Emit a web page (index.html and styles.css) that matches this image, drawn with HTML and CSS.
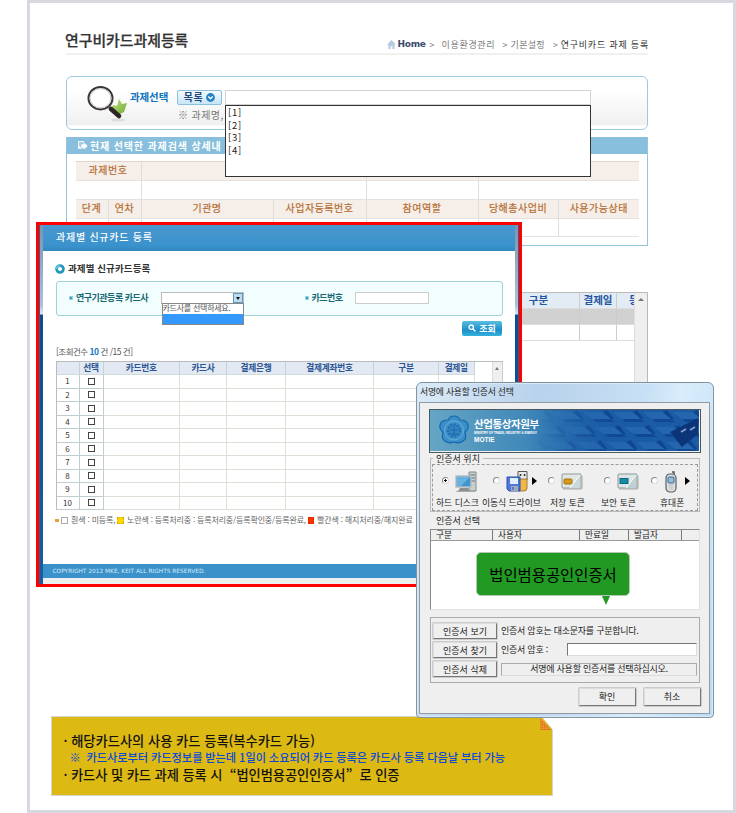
FILE: index.html
```html
<!DOCTYPE html>
<html lang="ko">
<head>
<meta charset="utf-8">
<title>연구비카드과제등록</title>
<link rel="stylesheet" href="styles.css">
</head>
<body>
<main class="page">
  <header class="page-head">
    <h1>연구비카드과제등록</h1>
    <nav class="crumbs">
      <svg width="9" height="9" viewBox="0 0 9 9"><path d="M4.5 0 0 4.4h1.4V9h2.2V6h1.8v3h2.2V4.4H9z" fill="#b5cbe2"/></svg>
      <b>Home</b><span class="c1">&gt;&nbsp; 이용환경관리</span><span class="c2">&gt; 기본설정</span><span class="c3">&gt; <em>연구비카드 과제 등록</em></span>
    </nav>
  </header>

  <section class="search">
    <svg class="lens" width="42" height="38" viewBox="0 0 42 38">
      <defs><linearGradient id="leaf" x2="1" y2="1"><stop stop-color="#c3df7e"/><stop offset="1" stop-color="#6faa35"/></linearGradient></defs>
      <ellipse cx="31" cy="34" rx="7" ry="1.6" fill="#ddd"/>
      <path d="m23 24 3-5 4 1 2-7 3 5 5-1-3 9-8 4z" fill="url(#leaf)"/>
      <ellipse cx="13.5" cy="12.2" rx="12" ry="11.2" fill="#fff" stroke="#3b3535" stroke-width="2"/>
      <ellipse cx="13.5" cy="12.2" rx="10.4" ry="9.6" fill="none" stroke="#bbb" stroke-width=".8"/>
      <path d="m22 21 3 3" stroke="#777" stroke-width="3"/><path d="m24 23 8 7" stroke="#2d2626" stroke-width="4.6" stroke-linecap="round"/>
    </svg>
    <div class="search-form">
      <div class="search-row">
        <strong>과제선택</strong>
        <button class="list-btn"><span>목록</span><svg width="9" height="9" viewBox="0 0 9 9"><circle cx="4.5" cy="4.5" r="4.4" fill="#2380c6"/><path d="m2.3 3.5 2.2 2.3 2.2-2.3" fill="none" stroke="#fff" stroke-width="1.4"/></svg></button>
        <div class="field"></div>
      </div>
      <p>※ 과제명,</p>
    </div>
    <ul class="suggest"><li>[1]</li><li>[2]</li><li>[3]</li><li>[4]</li></ul>
  </section>

  <section class="panel">
    <h2><svg width="11" height="11" viewBox="0 0 11 11"><path d="M1 1h6v8H1z" fill="#e8f4fa"/><path d="M2 3h4M2 5h4" stroke="#75adca"/><path d="M4 4h3V2l4 4-4 4V8H4z" fill="#fff" stroke="#78b4d2" stroke-width=".5"/></svg>현재 선택한 과제검색 상세내</h2>
    <div class="info">
      <div class="r top hd"><span>과제번호</span><span></span><span></span><span></span></div>
      <div class="r top"><span></span><span></span><span></span><span></span></div>
      <div class="r low hd"><span>단계</span><span>연차</span><span>기관명</span><span>사업자등록번호</span><span>참여역할</span><span>당해총사업비</span><span>사용가능상태</span></div>
      <div class="r low"><span></span><span></span><span></span><span></span><span></span><span></span><span></span></div>
    </div>
  </section>

  <section class="cards">
    <div class="cards-grid">
      <div class="cr ch"><span>구분</span><span>결제일</span><span class="cut">등</span></div>
      <div class="cr grey"><span></span><span></span><span></span></div>
      <div class="cr"><span></span><span></span><span></span></div>
    </div>
    <div class="track"><i class="up"></i></div>
  </section>

  <aside class="note">
    <p>· 해당카드사의 사용 카드 등록(복수카드 가능)</p>
    <p class="sub">※&nbsp; 카드사로부터 카드정보를 받는데 1일이 소요되어 카드 등록은 카드사 등록 다음날 부터 가능</p>
    <p class="third">· 카드사 및 카드 과제 등록 시&nbsp; “법인범용공인인증서”&nbsp; 로 인증</p>
    <svg class="fold" width="14" height="15" viewBox="0 0 14 15">
      <defs><pattern id="dots" width="2.6" height="2.6" patternUnits="userSpaceOnUse"><rect width="2.6" height="2.6" fill="#e39a20"/><rect width="1.2" height="1.2" fill="#ee4a24"/></pattern></defs>
      <path d="M2 0h12v14z" fill="#fff"/><path d="M1 1v13h12z" fill="url(#dots)"/><path d="m1 1 12 13" stroke="#d3b889" stroke-width=".8"/>
    </svg>
  </aside>
</main>

<section class="popup">
  <div class="popup-body">
    <header>과제별 신규카드 등록</header>
    <h3><svg width="10" height="10" viewBox="0 0 10 10"><circle cx="5" cy="5" r="3.4" fill="#fff" stroke="#2497bd" stroke-width="2.8"/><path d="M1.6 5A3.4 3.4 0 0 1 5 1.6" fill="none" stroke="#65c5dc" stroke-width="2"/></svg>과제별 신규카드등록</h3>
    <div class="filter">
      <label class="f1"><i></i>연구기관등록 카드사</label>
      <div class="select"><span class="drop"></span>
        <div class="options"><div>카드사를 선택하세요.</div><div class="on"></div></div>
      </div>
      <label class="f2"><i></i>카드번호</label>
      <div class="num"></div>
    </div>
    <div class="act"><button><svg width="8" height="8" viewBox="0 0 8 8"><circle cx="3.2" cy="3.2" r="2.2" fill="none" stroke="#fff" stroke-width="1.3"/><path d="m5 5 2.4 2.4" stroke="#fff" stroke-width="1.5"/></svg>조회</button></div>
    <p class="count">[조회건수 <b>10</b> 건 /15 건]</p>
    <div class="tablebox">
      <table>
        <colgroup><col class="k1"><col class="k2"><col class="k3"><col class="k4"><col class="k5"><col class="k6"><col class="k7"><col class="k8"></colgroup>
        <tr><th></th><th>선택</th><th>카드번호</th><th>카드사</th><th>결제은행</th><th>결제계좌번호</th><th>구분</th><th>결제일</th></tr>
        <tr><td>1</td><td><i></i></td><td></td><td></td><td></td><td></td><td></td><td></td></tr>
        <tr><td>2</td><td><i></i></td><td></td><td></td><td></td><td></td><td></td><td></td></tr>
        <tr><td>3</td><td><i></i></td><td></td><td></td><td></td><td></td><td></td><td></td></tr>
        <tr><td>4</td><td><i></i></td><td></td><td></td><td></td><td></td><td></td><td></td></tr>
        <tr><td>5</td><td><i></i></td><td></td><td></td><td></td><td></td><td></td><td></td></tr>
        <tr><td>6</td><td><i></i></td><td></td><td></td><td></td><td></td><td></td><td></td></tr>
        <tr><td>7</td><td><i></i></td><td></td><td></td><td></td><td></td><td></td><td></td></tr>
        <tr><td>8</td><td><i></i></td><td></td><td></td><td></td><td></td><td></td><td></td></tr>
        <tr><td>9</td><td><i></i></td><td></td><td></td><td></td><td></td><td></td><td></td></tr>
        <tr><td>10</td><td><i></i></td><td></td><td></td><td></td><td></td><td></td><td></td></tr>
      </table>
      <div class="track small"><i class="up"></i></div>
    </div>
    <p class="legend"><i class="dot"></i><i class="w"></i><span class="l1">흰색 : 미등록,</span><i class="y"></i><span class="l2">노란색 : 등록처리중 : 등록처리중/등록확인중/등록완료,</span><i class="rd"></i><span class="l3">빨간색 : 해지처리중/해지완료</span></p>
    <footer>COPYRIGHT 2012 MKE, KEIT ALL RIGHTS RESERVED.</footer>
  </div>
</section>

<section class="dialog">
  <h4>서명에 사용할 인증서 선택</h4>
  <div class="client">
    <div class="banner">
      <svg class="keys" width="269" height="41" viewBox="0 0 269 41">
        <defs>
          <linearGradient id="bg"><stop stop-color="#66a5c4"/><stop offset=".4" stop-color="#3c85b8"/><stop offset=".65" stop-color="#1e60a8"/><stop offset="1" stop-color="#11509c"/></linearGradient>
          <pattern id="key" width="30" height="15" patternUnits="userSpaceOnUse" patternTransform="skewX(38)"><rect width="30" height="15" fill="#1a5ba6"/><path d="M1 2h20l3 7H5z" fill="#2467af"/><path d="m21 2 6-2v9l-3 0z" fill="#0e4490"/><path d="M5 9h19l2 3H6z" fill="#114893"/></pattern>
          <linearGradient id="fade"><stop offset=".36" stop-color="#000"/><stop offset=".7" stop-color="#fff"/></linearGradient>
          <mask id="m"><rect width="269" height="41" fill="url(#fade)"/></mask>
        </defs>
        <rect width="269" height="41" fill="url(#bg)"/><rect width="269" height="41" fill="url(#key)" mask="url(#m)"/>
        <path d="m240 22 28-14v16l-16 13z" fill="#0c3478"/><path d="m251 22 5-3M260 20l5-3" stroke="#7f9fc8" stroke-width="2"/>
      </svg>
      <div class="brand">
        <svg width="30" height="30" viewBox="0 0 30 30"><path d="M15 1q4 0 6 4 7 0 8 5 1 4-3 7 2 7-2 9-4 3-9 1-5 2-9-1-4-2-2-9-4-3-3-7 1-5 8-5 2-4 6-4z" fill="#3b8fc8" stroke="#1268ae" stroke-width="1.2"/><circle cx="15" cy="15.5" r="9.5" fill="none" stroke="#6fadd6" stroke-width="1"/><circle cx="15" cy="15.5" r="6" fill="#3484c0" stroke="#1c6db0" stroke-dasharray="2 1.4" stroke-width="2"/><path d="M11 15h8M15 11v9M12 19h6" stroke="#1b69ab"/></svg>
        <div><b>산업통상자원부</b><small>MINISTRY OF TRADE, INDUSTRY &amp; ENERGY</small><strong>MOTIE</strong></div>
      </div>
    </div>
    <div class="group">
      <h5>인증서 위치</h5>
      <div class="media">
        <div class="m1"><span class="pic"><i class="radio sel"></i><svg width="22" height="22" viewBox="0 0 22 22"><path d="M14 1h7v19h-7z" fill="#c9cfcb" stroke="#7e8b90"/><path d="M15 4h5M15 7h5M15 10h5" stroke="#687780"/><path d="M1 5h15v11H1z" fill="#4193ce" stroke="#b5bfc5" stroke-width="1.4"/><path d="M2 6h13L6 15H2z" fill="#69b2dd"/><path d="M5 17h8l2 3H3z" fill="#8a9193"/><path d="M1 20.5h19" stroke="#aaa"/></svg></span><label>하드 디스크</label></div>
        <div class="m2"><span class="pic"><i class="radio"></i><svg width="22" height="22" viewBox="0 0 22 22"><path d="M12 .5h9V9h-9z" fill="#e9e9e9" stroke="#555"/><path d="M14.5 3v2M18.5 3v2" stroke="#333" stroke-width="1.5"/><path d="M13 8h8v9q0 3-3 3h-5z" fill="#efb84a" stroke="#a97b2a"/><path d="M1 6h13v14H3l-2-2z" fill="#4f77dc" stroke="#2850ae"/><path d="M4 7h8v6H4z" fill="#e2efff"/><path d="M5 15h7v5H5z" fill="#a2aac1"/><path d="M7 16v3" stroke="#234d9f"/></svg><b class="arrow"></b></span><label>이동식 드라이브</label></div>
        <div class="m3"><span class="pic"><i class="radio"></i><svg width="22" height="22" viewBox="0 0 22 22"><rect x="1" y="3" width="19" height="14" rx="1" fill="#e1e7e5" stroke="#909896"/><path d="m9 17 10-13v13z" fill="#c9d9dc"/><path d="m9 17 10-13" stroke="#fff"/><rect x="3" y="8" width="8" height="5" rx="1" fill="#d89a16" stroke="#a27513"/><path d="M2 18h19V5" fill="none" stroke="#aaa"/></svg></span><label>저장 토큰</label></div>
        <div class="m4"><span class="pic"><i class="radio"></i><svg width="22" height="22" viewBox="0 0 22 22"><rect x="1" y="3" width="19" height="14" rx="1" fill="#dce6e8" stroke="#879697"/><path d="m9 17 10-13v13z" fill="#bed1d5"/><path d="m9 17 10-13" stroke="#fff"/><rect x="3" y="7.500" width="8" height="5" fill="#168da4" stroke="#0c6479"/><path d="M2 18h19V5" fill="none" stroke="#aaa"/></svg></span><label>보안 토큰</label></div>
        <div class="m5"><span class="pic"><i class="radio"></i><svg width="14" height="22" viewBox="0 0 14 22"><path d="M10 4V1H8" fill="none" stroke="#555" stroke-width="1.4"/><rect x="2" y="3" width="10" height="18" rx="4" fill="#dfe2e5" stroke="#565d65" stroke-width="1.2"/><rect x="4" y="6" width="6" height="6" rx="1" fill="#8fc0df" stroke="#44627d"/><path d="M4.5 14h5M4.5 16h5M5 18h4" stroke="#bbb"/></svg><b class="arrow"></b></span><label>휴대폰</label></div>
      </div>
    </div>
    <p class="sect">인증서 선택</p>
    <div class="certs">
      <div class="cols"><span>구분</span><span>사용자</span><span>만료일</span><span>발급자</span><span></span></div>
      <div class="bubble">법인범용공인인증서</div>
    </div>
    <div class="manage">
      <button>인증서 보기</button><span>인증서 암호는 대소문자를 구분합니다.</span>
      <button>인증서 찾기</button><span class="pw">인증서 암호 :<i></i></span>
      <button>인증서 삭제</button><span class="status">서명에 사용할 인증서를 선택하십시오.</span>
    </div>
    <div class="actions"><button>확인</button><button>취소</button></div>
  </div>
</section>
</body>
</html>
```
FILE: styles.css
```css
* { box-sizing: border-box; margin: 0; padding: 0; }
html, body { width: 736px; height: 813px; overflow: hidden; background: #fff; }
body { position: relative; font-family: "Noto Sans CJK KR", sans-serif; font-size: 10px; line-height: 1; color: #333; }
button { font: inherit; letter-spacing: inherit; color: inherit; white-space: nowrap; }
i, em { font-style: normal; }
svg { display: block; flex: none; overflow: visible; }
span, p, label, h1, h2, h3, h4 { white-space: nowrap; }

.page { width: 709px; height: 812.5px; margin-left: 27px; border: 3px solid #d8d8e0; display: flex; flex-direction: column; padding: 0 0 14px 36px; }
.page-head { width: 582px; height: 51.5px; border-bottom: 2px solid #f0f0f0; display: flex; justify-content: space-between; align-items: flex-end; padding-bottom: 3px; flex: none; }
h1 { font-size: 14.9px; font-weight: 500; line-height: 17px; color: #333; -webkit-text-stroke: .25px #333; }
.page-head h1 { margin: 0 0 2px -1px; }
.crumbs { display: flex; align-items: center; height: 11px; font-size: 9px; color: #777; }
.crumbs b { font: bold 9px "DejaVu Sans", sans-serif; letter-spacing: -.3px; color: #3b4a6b; margin: 0 4px 0 2px; }
.c1 { width: 73px; letter-spacing: .65px; }
.c2 { width: 50.5px; letter-spacing: .25px; }
.c3 em { color: #333; letter-spacing: .8px; }
.c3 { margin-right: -1px; }

.search { position: relative; width: 582px; height: 54px; margin-top: 21px; border: 1.5px solid #9ccae3; border-radius: 6px; display: flex; padding: 9px 0 0 20px; background: linear-gradient(#fff 25%, #f0f0f0 92%, #fff 94%); flex: none; }
.search-form { margin-left: 1px; padding-top: 4px; }
.search-row { display: flex; align-items: center; height: 15px; }
.search strong { width: 47px; font-size: 10.5px; letter-spacing: -.1px; color: #1073bd; }
.list-btn { width: 45px; height: 15px; border: 1px solid #89bfdf; border-radius: 2px; background: linear-gradient(#f4fbff, #c8e5f7); color: #24457a; display: flex; align-items: center; justify-content: center; gap: 3px; font-size: 10px; font-weight: bold; letter-spacing: .5px; }
.field { width: 366px; height: 15px; margin-left: 3px; border: 1px solid #d3d3d3; background: #fff; }
.search p { margin: 5px 0 0 48px; font-size: 10px; letter-spacing: .4px; color: #777; }
.suggest { position: absolute; left: 158px; top: 28.5px; width: 366px; height: 71.5px; border: 1px solid #333; background: #fff; list-style: none; padding: 0 2px; font-size: 9.5px; color: #222; z-index: 1; }
.suggest li { height: 12.5px; line-height: 12.5px; letter-spacing: .7px; }

.panel { width: 582px; height: 108.5px; margin-top: 7.5px; border: 1.5px solid #93c5df; border-top: 0; padding-bottom: 8px; flex: none; }
.panel h2 { width: 100%; height: 17px; background: #87bfdc; color: #fff; font-size: 10px; letter-spacing: .85px; display: flex; align-items: center; gap: 2px; padding-left: 10px; }
.info { margin: 7px 8px 0 8.5px; border-top: 1px solid #e5d5c8; border-bottom: 1.5px solid #e3e3e3; height: 76px; }
.r { display: grid; height: 19px; }
.r:last-child { height: 18px; }
.r.top { grid-template-columns: 66px 225px 112px 1fr; }
.r.low { grid-template-columns: 33px 33px 132px 93px 112px 80px 1fr; }
.r span { border-right: 1px solid #dedede; border-bottom: 1px solid #e5e2e0; display: flex; align-items: center; justify-content: center; padding-bottom: 2px; }
.r span:last-child { border-right: 0; }
.hd { background: #f6eee8; color: #b56d32; font-size: 10px; letter-spacing: .5px; -webkit-text-stroke: .2px #b56d32; }

.cards { width: 582px; height: 110px; margin-top: 46.5px; border-top: 1px solid #bbb; border-right: 1px solid #b9b9b9; display: flex; flex: none; }
.cards-grid { flex: 1; }
.cr { display: grid; height: 16px; grid-template-columns: 514px 37px 1fr; border-bottom: 1px solid #ddd; }
.cr span { border-right: 1px solid #ccc; display: flex; align-items: center; justify-content: center; overflow: hidden; }
.cr span:last-child { border: 0; }
.cr span:first-child { padding-left: 432px; }
.ch { background: #e3ebf4; color: #2455a0; font-weight: bold; font-size: 10.5px; }
.cr .cut { width: 17px; justify-content: flex-start; padding-left: 12px; }
.grey { background: #d1d1d1; }
.track { width: 13.5px; background: #efefef; border-left: 1px solid #ddd; }
.up { display: block; margin: 5px auto 0; width: 0; border: 3px solid transparent; border-top: 0; border-bottom: 3px solid #777; }

.note { position: relative; width: 502px; height: 79.5px; margin: auto 0 0 -15.5px; background: #ddb914; border: 1px solid #d5d5cf; padding: 16px 0 0 12px; color: #111; font-weight: 500; font-size: 13.25px; flex: none; }
.note p { line-height: 16px; letter-spacing: 0; }
.note .sub { font-size: 11.2px; color: #0a49da; padding-left: 7px; height: 17px; word-spacing: -.2px; text-indent: -1px; letter-spacing: -.02px; }
.note .third { line-height: 18px; letter-spacing: -.08px; }
.fold { position: absolute; right: -1px; top: -1px; }

.popup { position: absolute; left: 36px; top: 222px; width: 486px; height: 365px; border: 3px solid red; padding: 0 4.5px 0 4px; background: linear-gradient(90deg, #345d88 1px, transparent 1px 479px, #345d88 479px), linear-gradient(#7895b5, #a9c1dc 80px, #dae6f2 89px, #0b4d91 90px, #165da2); }
.popup-body { width: 471.5px; height: 359px; background: #fff; border-bottom: 6.5px solid #eee; display: flex; flex-direction: column; }
.popup header { height: 26px; background: linear-gradient(#4b98cc, #3a92cd 80%, #3188c3); color: #fff; font-size: 10px; font-weight: 500; line-height: 24px; padding-left: 13px; letter-spacing: .75px; flex: none; }
.popup h3 { display: flex; align-items: center; gap: 3px; height: 10px; margin: 13px 0 0 12px; font-size: 9.5px; letter-spacing: .1px; flex: none; }
.filter { margin: 6.5px 0 0 13px; width: 447px; height: 35px; border: 1.5px solid #a0d0da; border-radius: 3px; background: #f2fefe; display: flex; align-items: center; padding-left: 12px; color: #186874; font-size: 9px; font-weight: bold; flex: none; }
.filter label { display: flex; align-items: center; gap: 3px; letter-spacing: -.5px; padding-bottom: 1px; }
.filter label i { width: 4px; height: 4px; background: #3b9db3; border: 1px solid #9bd4df; }
.f1 { width: 91.5px; }
.f2 { width: 50px; }
.select { position: relative; width: 83px; height: 12px; margin-right: 61px; border: 1px solid #bbb; background: #fff; display: flex; justify-content: flex-end; }
.drop { width: 10px; height: 10px; background: #bcdcf1; border: 1px solid #6199bc; display: grid; place-items: center; }
.drop::after { content: ""; border: 2.5px solid transparent; border-top: 3px solid #111; border-bottom: 0; }
.options { position: absolute; left: 0; top: 10px; width: 82px; height: 21.5px; border: 1px solid #888; background: #fff; color: #555; font-weight: normal; font-size: 8px; z-index: 1; }
.options div { height: 9.5px; line-height: 7px; letter-spacing: -.25px; white-space: nowrap; }
.options .on { height: 10px; background: #3399fc; }
.num { width: 74px; height: 12px; border: 1px solid #ccc; background: #fff; }
.act { height: 15px; margin: 5px 12.5px 0 0; display: flex; justify-content: flex-end; flex: none; }
.act button { width: 40px; height: 15px; border: 0; border-radius: 2px; background: linear-gradient(#5abee0, #1c8fc9 60%, #35b2dd); color: #fff; font-size: 9px; font-weight: bold; display: flex; align-items: center; justify-content: center; gap: 3px; }
.count { height: 10px; margin: 11px 0 0 13px; font-size: 8.5px; color: #555; letter-spacing: -.5px; flex: none; }
.count b { color: #1577bd; }
.tablebox { width: 447px; height: 149.5px; margin: 4px 0 0 12.5px; border: 1px solid #bbb; border-right: 1px solid #ccc; display: flex; justify-content: space-between; flex: none; }
table { border-collapse: separate; border-spacing: 0; table-layout: fixed; width: 418px; height: 147.5px; font-size: 8px; }
.k1 { width: 23px; } .k2 { width: 24px; } .k3 { width: 76.5px; } .k4 { width: 47px; } .k5 { width: 59px; } .k6 { width: 88px; } .k7 { width: 65px; } .k8 { width: 35.5px; }
tr { height: 13.5px; }
th { height: 13.5px; line-height: 8px; background: #e2e9f2; color: #2b5592; font-size: 8.7px; letter-spacing: -.25px; border-right: 1px solid #bfd2df; border-bottom: 1px solid #d1dbdc; }
td { line-height: 8px; text-align: center; vertical-align: middle; border-right: 1px solid #dedfd6; border-bottom: 1px solid #dfdfd8; }
td:first-child, td:nth-child(2) { border-bottom-color: #bdcdd0; border-right-color: #bdcdd0; }
td i { display: block; width: 7px; height: 7px; border: 1px solid #444; margin: 0 auto; }
.track.small { width: 9.5px; }
.small .up { border-width: 0 2px 3px; }
.legend { height: 10px; margin: 5px 0 0 12px; display: flex; align-items: center; font-size: 8px; color: #666; flex: none; }
.legend i { width: 7px; height: 7px; flex: none; }
.legend .dot { width: 4px; height: 3px; background: #e9a03a; margin-right: 2px; }
.legend .w { border: 1px solid #aaa; } .legend .y { background: #ffda00; border: 1px dashed #dcae00; } .legend .rd { width: 6px; background: #ff3500; border: 1px dotted #db1e00; }
.legend span { padding-left: 3px; letter-spacing: -.16px; flex: none; }
.l1 { width: 49px; } .l2 { width: 184px; } .l3 { width: 100px; }
.popup footer { height: 14.5px; margin-top: auto; background: #3b91c9; color: #d4edfa; font: 5.8px/14px "DejaVu Sans", sans-serif; padding-left: 9.5px; letter-spacing: .03px; }

.dialog { position: absolute; left: 415.5px; top: 382px; width: 298.5px; height: 335.5px; border: 1px solid #83939f; border-radius: 6px 6px 4px 4px; background: linear-gradient(100deg, #dceaf7, #b8d2ec 35%, #c8e0f5 65%, #d9edfb 75%, #b9dcf8); padding: 0 3.5px 3px 2.5px; font-size: 9px; color: #222; box-shadow: inset 0 0 0 1px #d7e9f7; }
.dialog h4 { height: 18.5px; line-height: 18px; font-size: 8.8px; font-weight: normal; padding-left: 1px; letter-spacing: -.2px; }
.client { height: 312.5px; border: 1px solid #919ba5; background: #efefef; padding: 6.5px 8.5px 0 9px; display: flex; flex-direction: column; }
.banner { position: relative; width: 272px; height: 43.5px; border: 1.5px solid #4c5860; flex: none; overflow: hidden; }
.keys { position: absolute; inset: 0; overflow: hidden; }
.brand { position: relative; display: flex; gap: 5px; padding: 5px 0 0 9px; color: #fff; }
.brand div { display: flex; flex-direction: column; padding-top: 3px; }
.brand b { font-size: 10.5px; letter-spacing: -.4px; line-height: 12px; white-space: nowrap; }
.brand small { font: bold 3px/5px "Liberation Sans", sans-serif; margin-top: 1px; letter-spacing: -.02px; white-space: nowrap; }
.brand strong { font: bold 6.5px/8px "Liberation Sans", sans-serif; }
.group { width: 270px; height: 54px; margin: 5.5px 0 0 1px; border: 1px solid #bbb; flex: none; }
.group h5 { position: relative; width: max-content; height: 10px; margin: -5px 0 0 2px; padding: 0 3px; background: #efefef; font-size: 9px; line-height: 10px; font-weight: normal; z-index: 1; }
.media { height: 47px; margin: 0 1px; border: 1px dashed #999; display: grid; grid-template-columns: 47px 63px 50px 54px 1fr; padding-top: 6px; }
.media > div { display: flex; flex-direction: column; }
.pic { display: flex; height: 24px; align-items: flex-start; }
.radio { width: 7px; height: 7px; border: 1px solid #888; border-right-color: #ddd; border-bottom-color: #ddd; border-radius: 50%; background: #fff; margin: 6px 6px 0 0; flex: none; }
.sel { background: radial-gradient(circle, #111 32%, #fff 40%); }
.arrow { margin: 6px 0 0 4px; border: 4.5px solid transparent; border-left: 5px solid #000; border-right: 0; }
.media label { font-size: 8.8px; margin-top: 4px; }
.m1 .pic { padding-left: 9px; } .m1 label { padding-left: 3px; }
.m2 .pic { padding-left: 12.5px; } .m2 label { padding-left: 2px; letter-spacing: -.05px; }
.m3 .pic { padding-left: 5px; } .m3 label { padding-left: 7px; }
.m4 .pic { padding-left: 10.5px; } .m4 label { padding-left: 8px; }
.m5 .pic { padding-left: 3.5px; } .m5 label { padding-left: 13px; } .m5 .arrow { margin-left: 7px; }
.sect { height: 14px; line-height: 18px; margin: 0 0 0 7px; font-size: 9px; flex: none; }
.certs { position: relative; width: 270px; height: 81px; margin: 3px 0 0 1px; border: 1.5px solid #888; border-right-color: #e3e3e3; border-bottom-color: #e3e3e3; background: #fff; flex: none; }
.cols { display: grid; grid-template-columns: 62px 87px 49px 53px 1fr; height: 11px; background: #efefef; border-bottom: 1px solid #999; line-height: 10px; font-size: 8.7px; }
.cols span { padding-left: 5px; border-right: 1px solid #777; }
.cols span:last-child { border: 0; }
.bubble { position: absolute; left: 45px; top: 21.5px; width: 154px; height: 44.5px; border-radius: 5px; border: .5px solid #b3c7b3; background: #219922; color: #000; font-size: 15.4px; line-height: 43px; text-align: center; white-space: nowrap; }
.bubble::after { content: ""; position: absolute; left: 125px; top: 43px; border: 4px solid transparent; border-top: 9px solid #219922; border-bottom: 0; }
.manage { width: 270px; height: 66px; margin: 6.5px 0 0 1px; border: 1px solid #aaa; padding: 5.5px 2px; display: grid; grid-template-columns: 64px 196px; grid-auto-rows: 16px; gap: 3px 4px; align-items: center; flex: none; font-size: 9px; }
.dialog button { height: 15.5px; background: #efefef; border: 1px solid #ddd; border-right: 1.5px solid #777; border-bottom: 1.5px solid #777; font-size: 9px; line-height: 11px; box-shadow: 0 0 0 .5px #aaa; }
.manage span { letter-spacing: -.25px; }
.manage > span:not(.status) { padding-bottom: 1px; }
.pw { display: flex; justify-content: space-between; align-items: center; }
.pw i { width: 130px; height: 13px; border: 1px solid #777; border-right-color: #ddd; border-bottom-color: #ddd; background: #fff; }
.manage .status { height: 13px; border: 1px solid #aaa; border-bottom-color: #ddd; line-height: 10px; text-align: center; }
.actions { display: flex; justify-content: flex-end; gap: 8px; margin: 5px -.5px 0 0; }
.dialog .actions button { width: 57px; height: 18.5px; }
```
